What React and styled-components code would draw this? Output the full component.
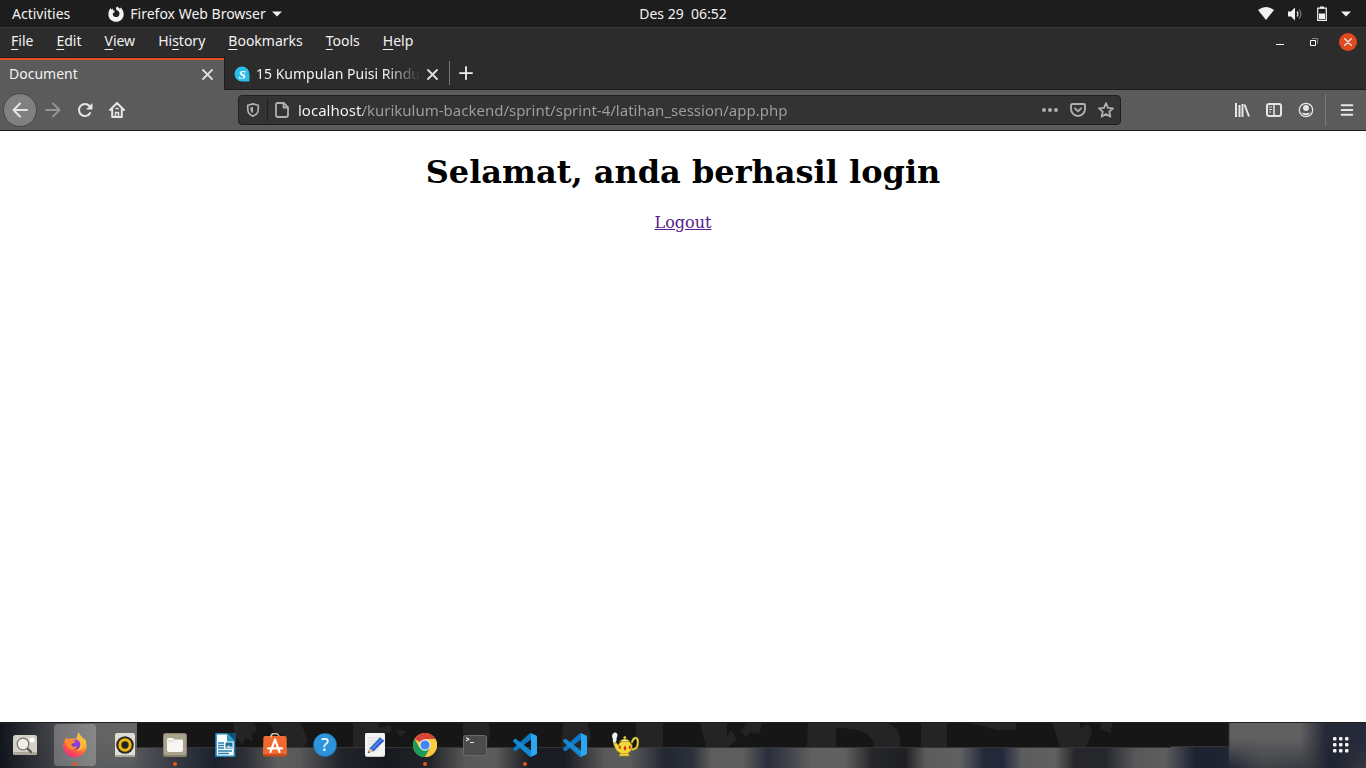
import React from "react";
import styled, { createGlobalStyle, css } from "styled-components";

const GlobalStyle = createGlobalStyle`
  * { box-sizing: border-box; }
  body { margin: 0; background: #fff; }
  button { border: 0; padding: 0; margin: 0; background: none; color: inherit; font: inherit; }
  svg { display: block; flex: none; }
`;

const ui = css`
  font-family: "Noto Sans", "Open Sans", sans-serif;
  font-size: 14px;
  line-height: 20px;
`;

const Desktop = styled.div`
  ${ui}
  display: flex;
  flex-direction: column;
  min-height: 100vh;
  color: #f2f2f2;
`;

/* ---------- system bar ---------- */
const SystemBar = styled.header`
  display: grid;
  grid-template-columns: 1fr auto 1fr;
  align-items: center;
  height: 27px;
  background: #1d1d1d;
`;
const SystemGroup = styled.div`
  display: flex;
  align-items: center;
  gap: ${(p) => p.$gap}px;
  padding: 0 15px 0 12px;
  justify-content: ${(p) => (p.$end ? "flex-end" : "flex-start")};
`;
const SystemButton = styled.button`
  display: flex;
  align-items: center;
  gap: 6px;
  white-space: pre;
`;

/* ---------- browser ---------- */
const Browser = styled.main`
  display: flex;
  flex-direction: column;
  flex: 1;
`;
const MenuBar = styled.nav`
  display: flex;
  justify-content: space-between;
  height: 30px;
  background: #2c2c2c;
  border-top: 1px solid #3d3d3d;
`;
const MenuList = styled.div`
  display: flex;
  align-items: flex-start;
  gap: 1px;
  padding-top: 3px;
`;
const MenuButton = styled.button`
  padding: 0 11px;
  u {
    text-decoration-thickness: 1px;
    text-underline-offset: 3px;
  }
`;
const WindowControls = styled.div`
  display: flex;
  align-items: center;
  gap: 16px;
  height: 28px;
  padding-right: 9px;
`;
const WindowButton = styled.button`
  display: flex;
  align-items: center;
  justify-content: center;
  width: 18px;
  height: 18px;
  border-radius: 50%;
  background: ${(p) => (p.$close ? "#e2491c" : "transparent")};
`;

const TabStrip = styled.div`
  display: flex;
  height: 33px;
  background: #2c2c2c;
  border-bottom: 1px solid #1c1c1c;
`;
const Tab = styled.div`
  display: flex;
  align-items: center;
  gap: 6px;
  width: ${(p) => (p.$active ? 225 : 224)}px;
  height: 33px;
  padding: 0 11px 0 9px;
  border-top: 1px solid ${(p) => (p.$active ? "#1c1c1c" : "transparent")};
  border-right: ${(p) => (p.$active ? "1px solid #1c1c1c" : "0")};
  background: ${(p) => (p.$active ? "#5b5b5b" : "transparent")};
  box-shadow: ${(p) => (p.$active ? "inset 0 2px #e2501c" : "none")};
`;
const TabTitle = styled.button`
  flex: 1;
  min-width: 0;
  height: 22px;
  overflow: hidden;
  text-align: left;
  white-space: nowrap;
  mask-image: ${(p) => (p.$fade ? "linear-gradient(to left, transparent, #000 36px)" : "none")};
`;
const TabClose = styled.button`
  display: flex;
`;
const NewTab = styled.button`
  display: flex;
  align-items: center;
  align-self: center;
  height: 24px;
  padding: 0 9px;
  border-left: 1px solid #777;
`;

const Toolbar = styled.div`
  display: flex;
  align-items: center;
  height: 41px;
  padding: 0 3px;
  background: #5b5b5b;
  border-bottom: 1px solid #1f1f1f;
`;
const ToolButton = styled.button`
  display: flex;
  align-items: center;
  justify-content: center;
  width: 32px;
  height: 32px;
  color: ${(p) => (p.$dim ? "#949494" : "#e6e6e6")};
`;
const BackButton = styled(ToolButton)`
  width: 34px;
  height: 34px;
  border: 1px solid #464646;
  border-radius: 50%;
  background: #808080;
`;
const Spacer = styled.div`
  flex: 0 1 105px;
`;
const AddressBar = styled.div`
  display: flex;
  align-items: center;
  flex: 1;
  min-width: 0;
  height: 30px;
  border: 1px solid #1f1f1f;
  border-radius: 4px;
  background: #333;
  color: #b0b0b0;
`;
const AddressButton = styled.button`
  display: flex;
  align-items: center;
  justify-content: center;
  width: 28px;
  height: 22px;
`;
const ShieldButton = styled(AddressButton)`
  width: 29px;
  border-right: 1px solid #1f1f1f;
`;
const AddressInput = styled.input`
  ${ui}
  flex: 1;
  min-width: 0;
  margin: 0 0 0 2px;
  padding: 0;
  border: 0;
  outline: 0;
  font-size: 15px;
  color: transparent;
  background: linear-gradient(to right, #fafafa 65px, #a0a0a0 65px);
  background-clip: text;
  -webkit-background-clip: text;
`;
const AppMenu = styled.div`
  display: flex;
  margin-left: 3px;
  padding-left: 5px;
  border-left: 1px solid #7c7c7c;
`;

/* ---------- web page ---------- */
const Page = styled.article`
  flex: 1;
  padding: 22px 8px;
  background: #fff;
  color: #000;
  text-align: center;
  font-family: "DejaVu Serif", serif;
  font-size: 16px;
  line-height: 19px;
`;
const Heading = styled.h1`
  margin: 0 0 21px;
  font-size: 32px;
  line-height: 39px;
`;
const PageLink = styled.a`
  color: #551a8b;
`;

/* ---------- dock ---------- */
const Dock = styled.footer`
  position: relative;
  display: flex;
  justify-content: space-between;
  height: 46px;
  background: #171a22;
  overflow: hidden;
`;
const Wallpaper = styled.svg`
  position: absolute;
  inset: 0;
  width: 100%;
  height: 100%;
`;
const DockList = styled.div`
  position: relative;
  display: flex;
  align-items: center;
  gap: 8px;
  padding: 0 4px;
`;
const DockButton = styled.button`
  position: relative;
  display: flex;
  align-items: center;
  justify-content: center;
  width: 42px;
  height: 42px;
  border-radius: 4px;
  background: ${(p) => (p.$active ? "rgba(255,255,255,.24)" : "transparent")};
  &::after {
    content: "";
    display: ${(p) => (p.$running ? "block" : "none")};
    position: absolute;
    bottom: 0;
    left: 19px;
    width: 4px;
    height: 4px;
    border-radius: 50%;
    background: #e95420;
  }
`;

const Caret = () => (
  <svg width="10" height="6" viewBox="0 0 10 6"><path d="M0 .5h10L5 5.5z" fill="#f2f2f2" /></svg>
);
const Cross = ({ size = 11, width = 1.8 }) => (
  <svg width={size} height={size} viewBox="0 0 11 11" fill="none" stroke="#dedede" strokeWidth={width} strokeLinecap="round">
    <path d="M1 1l9 9M10 1l-9 9" />
  </svg>
);
const Line = ({ children, size = 16, w = 2, ...rest }) => (
  <svg width={size} height={size} viewBox="0 0 16 16" fill="none" stroke="currentColor" strokeWidth={w} strokeLinecap="round" strokeLinejoin="round" {...rest}>
    {children}
  </svg>
);

const FirefoxMono = () => (
  <svg width="16" height="16" viewBox="0 0 16 16">
    <path fill="#f2f2f2" d="M.4 8.500C.4 5.500 1.300 3.500 2.600 2l.5 1.500L5 2.600l-.2 1.600 1.900.6-.4 1.700-1.500.7c-.3 2 1 3.900 3.200 3.900 2 0 3.500-1.500 3.500-3.400 0-2-1.200-2.800-2.600-3.500-.8-.5-1.200-1.500-.6-2.700L9.300.2c.4 1.200 1.600 1.600 2.900 2.600l.3-1.200c2 1.600 3.200 3.900 3.200 6.600 0 4.300-3.400 7.600-7.600 7.600S.4 12.700.4 8.500z" />
  </svg>
);

const DockIcon = ({ children }) => (
  <svg width="24" height="24" viewBox="0 0 24 24">{children}</svg>
);
const VsCode = () => (
  <DockIcon>
    <path fill="#0b78c5" d="M18 6.600L3 18 1.700 17.900.3 16.700a1 1 0 0 1 0-1.500L16.500.5 18 0z" />
    <path fill="#1687d2" d="M3 6l15 11.400V24l-1.500-.5L.3 8.700a1 1 0 0 1 0-1.400L1.700 6.100A1 1 0 0 1 3 6z" />
    <path fill="#2ba6f2" d="M18.200.2l5 2.400a1.500 1.500 0 0 1 .8 1.300V20a1.500 1.500 0 0 1-.8 1.400l-5 2.400a1.500 1.500 0 0 1-1.700-.3c.6.500 1.500.1 1.500-.7V1.200c0-.8-.9-1.200-1.500-.7a1.500 1.500 0 0 1 1.700-.3z" />
  </DockIcon>
);

const dockApps = [
  { name: "Image Viewer", icon: (
    <DockIcon>
      <rect x="0" y="2" width="24" height="20" rx="2.500" fill="#d3d0c7" /><rect x="0" y="19" width="24" height="3" rx="1.500" fill="#aaa699" />
      <circle cx="19" cy="7" r="2.600" fill="#fff" />
      <path d="M14 15l4 4" stroke="#55534d" strokeWidth="2.200" strokeLinecap="round" />
      <circle cx="10" cy="11" r="5.800" fill="#eeeeec" stroke="#777468" strokeWidth="1.200" />
    </DockIcon>) },
  { name: "Firefox", active: true, running: true, icon: (
    <svg width="26" height="26" viewBox="0 0 26 26">
      <defs>
        <linearGradient id="ffBody" x1=".8" y1="0" x2=".25" y2="1"><stop stopColor="#fff04a" /><stop offset=".35" stopColor="#ffb32c" /><stop offset=".65" stopColor="#ff6139" /><stop offset="1" stopColor="#f0258a" /></linearGradient>
        <linearGradient id="ffGlobe" x1=".7" y1="0" x2=".3" y2="1"><stop stopColor="#b03bdc" /><stop offset="1" stopColor="#5946cf" /></linearGradient>
      </defs>
      <path fill="url(#ffBody)" d="M2.700 8.500C3 7 4 5.800 4.800 5c0 1 .3 1.600.6 2.200C6.900 6.500 8.500 6.400 10 6.800c1-.2 2.800-.6 5-.3.3-2.200.4-3.800 1.700-6 1.200 3.400 4 4.800 5 7.300l.2-1.800c2 2.600 2.800 5.300 2.600 8.300C24.400 20.500 19.300 25.300 13 25.300S1.100 20.400 1.100 14c0-2.200.6-4.200 1.600-5.500z" />
      <circle cx="13.500" cy="12.500" r="5" fill="url(#ffGlobe)" />
      <path fill="#ff8a34" d="M3.500 9C6 6.700 9 6.700 10.500 8.300l3 1c-.2 1.400-1.900 1.800-3.400 2.200-.8.600-.8 1.800.2 2.700 1.800.8 3.300.4 4.700-.5-.5 3-3 4.300-5.800 3.600C5.800 16.300 3.500 13 3.500 9z" />
      <path fill="#ffb83a" d="M15 6.300c2.200 1.600 3.700 3.500 3.500 6.700-.1 3-2 5-4.500 5.700 5 .1 8.100-2.700 8.100-6.800 0-2.700-1.500-4.600-3.300-6.600L17 1.500z" />
    </svg>) },
  { name: "Rhythmbox", icon: (
    <DockIcon>
      <rect x="2" y="0" width="20" height="24" rx="2" fill="#e0ddd5" /><rect x="2" y="22" width="20" height="2" rx="1" fill="#aaa699" />
      <circle cx="12" cy="12" r="8.800" fill="#292929" /><circle cx="12" cy="12" r="5.200" fill="none" stroke="#f1b50c" strokeWidth="3" /><circle cx="12" cy="12" r="2.500" fill="#222" />
    </DockIcon>) },
  { name: "Files", running: true, icon: (
    <DockIcon>
      <rect x="0" y="0" width="24" height="24" rx="2.500" fill="#89816d" /><rect x="1" y="1" width="22" height="21" rx="2" fill="#aaa38f" />
      <path d="M4 6.500Q4 5 5.500 5H10l1.500 1.500h7.500Q20 6.500 20 8v9q0 2-2 2H6q-2 0-2-2z" fill="#f7f6f3" /><path d="M4.500 8H11l1.500-1.400" stroke="#d8d4cb" fill="none" />
    </DockIcon>) },
  { name: "LibreOffice Writer", icon: (
    <DockIcon>
      <path d="M3 .8h12l6.500 6.500v16H3z" fill="#fff" stroke="#1f85b8" strokeWidth="1.600" /><path d="M14 0h9v9z" fill="#0d526f" /><path d="M14 1v7.500h8z" fill="#2b95c9" />
      <path d="M5 10h6M5 12.500h6M5 15h6M5 18h14M5 20.500h11" stroke="#2481b0" strokeWidth="1.300" /><rect x="12.500" y="9.500" width="7" height="6" fill="#1f6f9a" /><path d="M13 15l2.500-3 2 2 2-1v2z" fill="#b8d9e8" />
    </DockIcon>) },
  { name: "Ubuntu Software", icon: (
    <svg width="24" height="24" viewBox="0 0 24 24">
      <path d="M8 4.500C8 1 9.500.6 12 .6s4 .4 4 3.900" fill="none" stroke="#d9c49a" strokeWidth="1.500" />
      <path d="M2 3h20q1.500 0 1.600 1.500L24 21q0 2-2 2H2q-2 0-2-2L.4 4.500Q.5 3 2 3z" fill="#f06a30" /><path d="M0 21h24q0 2.500-2 2.500H2Q0 23.500 0 21z" fill="#c94c1d" />
      <path d="M8 4.500C8 2 8.500 1.200 10 .8" fill="none" stroke="#d9c49a" strokeWidth="1.500" />
      <path d="M7.500 19L12 6.500 16.500 19M5 15.300h14" fill="none" stroke="#fff" strokeWidth="2.200" strokeLinecap="round" strokeLinejoin="round" />
    </svg>) },
  { name: "Help", icon: (
    <DockIcon>
      <circle cx="12" cy="12" r="11.700" fill="#2483c9" /><circle cx="12" cy="11.500" r="10.800" fill="#2d94dc" />
      <text x="12" y="18" textAnchor="middle" fontFamily="Noto Sans, sans-serif" fontSize="18" fill="#fff">?</text>
    </DockIcon>) },
  { name: "Text Editor", icon: (
    <DockIcon>
      <rect x="2" y="0" width="20" height="24" rx="2" fill="#c9c8c5" /><rect x="2" y="0" width="20" height="23" rx="2" fill="#f4f4f2" />
      <path d="M5 5h12M5 8h12M5 11h12M5 14h12M5 17h12" stroke="#d5d5d2" strokeWidth=".8" />
      <path d="M6.500 15.500L17 4.300 21.300 7.800 10.500 18.500z" fill="#2f60cf" /><path d="M8 17L19 6" stroke="#5b8df0" strokeWidth="1.300" /><path d="M6.500 15.500l4 3L5 20z" fill="#e7b98f" /><path d="M5.500 18l1.500 1.400L4.700 20z" fill="#333" />
    </DockIcon>) },
  { name: "Google Chrome", running: true, icon: (
    <DockIcon>
      <circle cx="12" cy="12" r="12" fill="#fccb3e" /><path d="M12 12L1.600 6A12 12 0 0 1 22.400 6z" fill="#d84437" />
      <path d="M1.600 6A12 12 0 0 0 12 24l5.200-9L12 12 6.800 15z" fill="#199c57" /><path d="M22.400 6H12l5.200 9L12 24A12 12 0 0 0 22.400 6z" fill="#fccb3e" />
      <circle cx="12" cy="12" r="5.800" fill="#f2f2f2" /><circle cx="12" cy="12" r="4.600" fill="#4285f4" />
    </DockIcon>) },
  { name: "Terminal", icon: (
    <DockIcon>
      <rect x=".5" y="2.500" width="23" height="20" rx="2" fill="#4b4b4b" stroke="#696969" /><path d="M3 4.500l3 1.700L3 8M7 9.500h4" stroke="#e4e4e4" strokeWidth="1.100" fill="none" />
    </DockIcon>) },
  { name: "Visual Studio Code", running: true, icon: <VsCode /> },
  { name: "Visual Studio Code Insiders", icon: <VsCode /> },
  { name: "Teapot", icon: (
    <svg width="28" height="28" viewBox="0 0 28 28">
      <path d="M3.500 13C1 11 2.500 9 1.500 7 .6 4.500 1.500 1.800 4 1.500 6.500 1.500 7 4 6 6c-1 1.500.2 2.500-.7 4z" fill="#f4f4f4" />
      <path d="M20.500 11.500c1-.5 1.300-4.500 4-4.500 2 0 2.500 1.500 2.300 5 0 4-2.300 6.500-6 6.500" fill="none" stroke="#8f7c1c" strokeWidth="2.400" />
      <path d="M20.500 11.500c1-.5 1.300-4.500 4-4.500 2 0 2.500 1.500 2.300 5 0 4-2.300 6.500-6 6.500" fill="none" stroke="#ecd83a" strokeWidth="1.500" />
      <path d="M2.500 12.500l2.700-1 2 3c.6-3 3.300-4.500 7-4.500s7 2 7 5.500c0 3.300-2 5.500-4.200 6.500l1.500 3H8l1.300-3C5.500 20.500 4 17 2.500 12.500z" fill="#f1da37" stroke="#9c861b" strokeWidth=".7" />
      <path d="M8.500 10.500q5.300-5 10.600 0z" fill="#fff28a" stroke="#9c861b" strokeWidth=".6" /><circle cx="13.800" cy="6.600" r="1.300" fill="#f3e04a" stroke="#9c861b" strokeWidth=".4" />
      <path d="M8.800 14l1.200 2.300-1.200 2.300-1.200-2.300zM14 14.500l1.500 2.800-1.500 2.800-1.500-2.800zM18.800 14l1.200 2.300-1.200 2.300-1.200-2.300z" fill="#d52b1e" /><path d="M9 22.500h9" stroke="#b8941c" strokeWidth=".8" />
    </svg>) },
];

/* Blurred light seen below the dark window edge, as [x, colour] stops. */
const lowerBand = [
  [0, "#12151d"], [40, "#33353b"], [90, "#5a5b5d"], [130, "#5a5b5d"], [170, "#3a3d46"], [215, "#1c212d"], [245, "#2e3036"],
  [278, "#5d5d5d"], [300, "#585858"], [340, "#22252c"], [385, "#17191f"], [430, "#232429"], [465, "#585858"], [495, "#5c5c5c"],
  [530, "#1a1c22"], [565, "#1b1d23"], [605, "#5a5a5b"], [630, "#5a5a5b"], [665, "#232732"], [692, "#2c303a"], [712, "#5e5e5e"],
  [742, "#5e5e5e"], [768, "#2a2e3b"], [790, "#42454d"], [812, "#606060"], [845, "#606060"], [872, "#26272a"], [905, "#1f2024"],
  [926, "#5c5c5c"], [960, "#606060"], [985, "#23283a"], [1002, "#23283a"], [1022, "#5c5c5c"], [1055, "#606060"], [1075, "#26272b"],
  [1105, "#25272d"], [1135, "#575758"], [1165, "#5e5e5e"], [1195, "#1d2231"], [1225, "#1f2433"], [1262, "#414349"], [1310, "#393b42"], [1330, "#1d2130"], [1366, "#363840"],
];
const upperBand = [[0, "#12151d"], [45, "#3c3e43"], [95, "#636363"], [137, "#666"], [1229, "#606060"], [1300, "#606060"], [1325, "#272b38"], [1345, "#242837"], [1366, "#25293a"]];

const Stops = ({ id, list }) => (
  <linearGradient id={id} gradientUnits="userSpaceOnUse" x1="0" x2="1366" y1="0" y2="0">
    {list.map(([x, c]) => <stop key={x} offset={x / 1366} stopColor={c} />)}
  </linearGradient>
);

const Backdrop = () => (
  <Wallpaper viewBox="0 0 1366 46" preserveAspectRatio="none" aria-hidden="true">
    <defs>
      <Stops id="lowerBand" list={lowerBand} />
      <Stops id="upperBand" list={upperBand} />
      <linearGradient id="fade" x1="0" x2="0" y1="0" y2="1"><stop offset=".35" stopColor="#fff" /><stop offset="1" stopColor="#000" /></linearGradient>
      <mask id="fadeDown"><rect width="1366" height="46" fill="url(#fade)" /></mask>
    </defs>
    <rect width="1366" height="46" fill="url(#lowerBand)" />
    <rect width="1366" height="46" fill="url(#upperBand)" mask="url(#fadeDown)" clipPath="url(#outer)" />
    <clipPath id="outer"><path d="M0 0h137v46H0zM1229 0h137v46h-137z" /></clipPath>
    <path d="M137 0h1092v25H137z" fill="#161616" />
    <path d="M137 25.500h1034M1171 24.500h58V0" fill="none" stroke="#333" />
    <g fill="#242424">
      <path d="M234 0h20l3 9-6 3 2 7-7-3-4 6-8-8zM270 0h30l8 18-4 7h-16l-6-12-8-3z" />
      <path d="M353 0h24l3 6 10-3 2 6-9 4 3 8-8 4h-25zM395 8l12 1-6 6z" />
      <path d="M463 0h26l1 10-3 15h-24zM563 0h24l4 14-3 11h-27zM636 0h27v25h-27z" />
      <path d="M700 0h27v14l4-6 6 9-9 8h-22zM735 3l6 5 7-7h14l-3 11-8-2-5 5z" />
      <path d="M808 0h76q18 4 16 25h-26q0-19-38-19v19h-29z" />
      <path d="M921 0h26v25h-26zM966 0h50v8h-18z" />
      <path d="M1052 0h27l2 7 6-5 5 6-2 8-4 9h-26zM1102 0h11l-3 11-10-4z" />
    </g>
    <path d="M0 .5h1366" stroke="#202020" />
  </Wallpaper>
);

const menus = [["", "F", "ile"], ["", "E", "dit"], ["", "V", "iew"], ["Hi", "s", "tory"], ["", "B", "ookmarks"], ["", "T", "ools"], ["", "H", "elp"]];

export default function App() {
  return (
    <Desktop>
      <GlobalStyle />
      <SystemBar>
        <SystemGroup $gap={38}>
          <SystemButton>Activities</SystemButton>
          <SystemButton><FirefoxMono />Firefox Web Browser<Caret /></SystemButton>
        </SystemGroup>
        <SystemButton>Des 29  06:52</SystemButton>
        <SystemGroup $gap={13} $end>
          <svg width="16" height="13" viewBox="0 0 16 13"><path d="M0 3Q8-3 16 3L8 13z" fill="#f2f2f2" /></svg>
          <svg width="16" height="14" viewBox="0 0 16 14"><path d="M1 4.500h3L8 .5v13L4 9.500H1z" fill="#f2f2f2" /><path d="M10 4.500q2 2.500 0 5" fill="none" stroke="#d5d5d5" strokeWidth="1.300" /><path d="M12 2.500q4 4.500 0 9" fill="none" stroke="#777" strokeWidth="1.200" /></svg>
          <svg width="12" height="16" viewBox="0 0 12 16"><path d="M1.700 2.200h8.600v12.100H1.700z" fill="none" stroke="#f2f2f2" strokeWidth="1.200" /><path d="M4 .5h4v2H4zM3 7.500h6V13H3z" fill="#f2f2f2" /></svg>
          <Caret />
        </SystemGroup>
      </SystemBar>

      <Browser>
        <MenuBar>
          <MenuList>
            {menus.map(([a, k, b]) => <MenuButton key={k + b}>{a}<u>{k}</u>{b}</MenuButton>)}
          </MenuList>
          <WindowControls>
            <WindowButton aria-label="Minimize"><svg width="8" height="8" viewBox="0 0 8 8"><path d="M0 6.500h8" stroke="#fff" /></svg></WindowButton>
            <WindowButton aria-label="Restore"><svg width="8" height="8" viewBox="0 0 8 8" fill="none"><path d="M.5 2.500h5v5h-5z" stroke="#fff" /><path d="M2 .5h5.500V6" stroke="#888" /></svg></WindowButton>
            <WindowButton $close aria-label="Close"><Cross size={8} width={2} /></WindowButton>
          </WindowControls>
        </MenuBar>

        <TabStrip>
          <Tab $active>
            <TabTitle>Document</TabTitle>
            <TabClose aria-label="Close tab"><Cross /></TabClose>
          </Tab>
          <Tab>
            <svg width="16" height="16" viewBox="0 0 16 16"><path d="M8 .5A7.500 7.500 0 0 1 15.500 8v7.500H8A7.500 7.500 0 0 1 8 .5z" fill="#29bdea" /><text x="8" y="12.500" textAnchor="middle" fontFamily="Liberation Serif, serif" fontStyle="italic" fontWeight="700" fontSize="13" fill="#fff">S</text></svg>
            <TabTitle $fade>15 Kumpulan Puisi Rindu</TabTitle>
            <TabClose aria-label="Close tab"><Cross /></TabClose>
          </Tab>
          <NewTab aria-label="New tab"><Line size={14} w={2}><path d="M8 1v14M1 8h14" /></Line></NewTab>
        </TabStrip>

        <Toolbar>
          <BackButton aria-label="Back"><Line><path d="M15 8H1.500M8 1.500L1.500 8 8 14.500" /></Line></BackButton>
          <ToolButton $dim aria-label="Forward"><Line><path d="M1 8h13.500M8 1.500L14.500 8 8 14.500" /></Line></ToolButton>
          <ToolButton aria-label="Reload"><Line><path d="M13.200 11A6 6 0 1 1 12.500 4" /><path d="M15.500 1v6.500H9z" fill="currentColor" stroke="none" /></Line></ToolButton>
          <ToolButton aria-label="Home"><Line><path d="M1 8l7-7 7 7M3.200 7v8h9.600V7" /><path d="M6.500 15v-4.500h3V15" strokeWidth="1.500" /><path d="M7 6.500h2" strokeWidth="1.500" /></Line></ToolButton>
          <Spacer />
          <AddressBar>
            <ShieldButton aria-label="Tracking protection"><Line size={14} w={1.900}><path d="M8 1L14 2.500V7c0 4-2.500 6.500-6 8-3.500-1.500-6-4-6-8V2.500z" /><path d="M8 4.500v7C6 10.500 5 9 5 7V5.200z" fill="currentColor" stroke="none" /></Line></ShieldButton>
            <AddressButton aria-label="Site information"><Line w={1.800}><path d="M3.500 1h6.200L14 5.300V13q0 2-2 2H4q-2 0-2-2V3q0-2 1.500-2z" /><path d="M9.500 1v4.500H14" /></Line></AddressButton>
            <AddressInput aria-label="Address" defaultValue="localhost/kurikulum-backend/sprint/sprint-4/latihan_session/app.php" />
            <AddressButton aria-label="Page actions"><svg width="16" height="16" viewBox="0 0 16 16" fill="currentColor"><circle cx="2" cy="8" r="2" /><circle cx="8" cy="8" r="2" /><circle cx="14" cy="8" r="2" /></svg></AddressButton>
            <AddressButton aria-label="Save to Pocket"><Line w={1.900}><path d="M2.500 2h11Q15 2 15 3.500V7A7 7 0 0 1 1 7V3.500Q1 2 2.500 2z" /><path d="M5 6.300l3 3 3-3" /></Line></AddressButton>
            <AddressButton aria-label="Bookmark"><Line w={1.800}><path d="M8 1.200l2 4.600 5 .5-3.700 3.400 1.100 5L8 12.100l-4.400 2.600 1.100-5L1 6.300l5-.5z" /></Line></AddressButton>
          </AddressBar>
          <Spacer />
          <ToolButton aria-label="Library"><Line strokeLinecap="butt"><path d="M2 1v14M5.500 3v12M8.500 2v13M10.500 2.500L15 14.500" strokeLinecap="butt" /></Line></ToolButton>
          <ToolButton aria-label="Sidebars"><Line><rect x="1" y="2" width="14" height="12" rx="2" /><path d="M8 2v12" strokeWidth="1.500" /><path d="M3.500 5h2M3.500 7.500h2M3.500 10h1" strokeWidth="1" /></Line></ToolButton>
          <ToolButton aria-label="Account"><Line w={1.300}><circle cx="8" cy="8" r="6.700" /><circle cx="8" cy="6" r="3" fill="currentColor" stroke="none" /><path d="M3.500 10.500q4.500 1.500 9 0Q11 13.300 8 13.300t-4.500-2.800z" fill="currentColor" stroke="none" /></Line></ToolButton>
          <AppMenu><ToolButton aria-label="Open menu"><Line size={14} w={2.400}><path d="M2 2.500h12M2 8h12M2 13.500h12" /></Line></ToolButton></AppMenu>
        </Toolbar>

        <Page>
          <Heading>Selamat, anda berhasil login</Heading>
          <PageLink href="#logout">Logout</PageLink>
        </Page>
      </Browser>

      <Dock>
        <Backdrop />
        <DockList>
          {dockApps.map((a) => (
            <DockButton key={a.name} aria-label={a.name} $active={a.active} $running={a.running}>{a.icon}</DockButton>
          ))}
        </DockList>
        <DockList>
          <DockButton aria-label="Show applications">
            <svg width="18" height="18" viewBox="0 0 18 18" fill="#f5f5f5">
              {[1, 7, 13].map((y) => [1, 7, 13].map((x) => <rect key={`${x}-${y}`} x={x} y={y} width="3.500" height="3.500" rx="1" />))}
            </svg>
          </DockButton>
        </DockList>
      </Dock>
    </Desktop>
  );
}
